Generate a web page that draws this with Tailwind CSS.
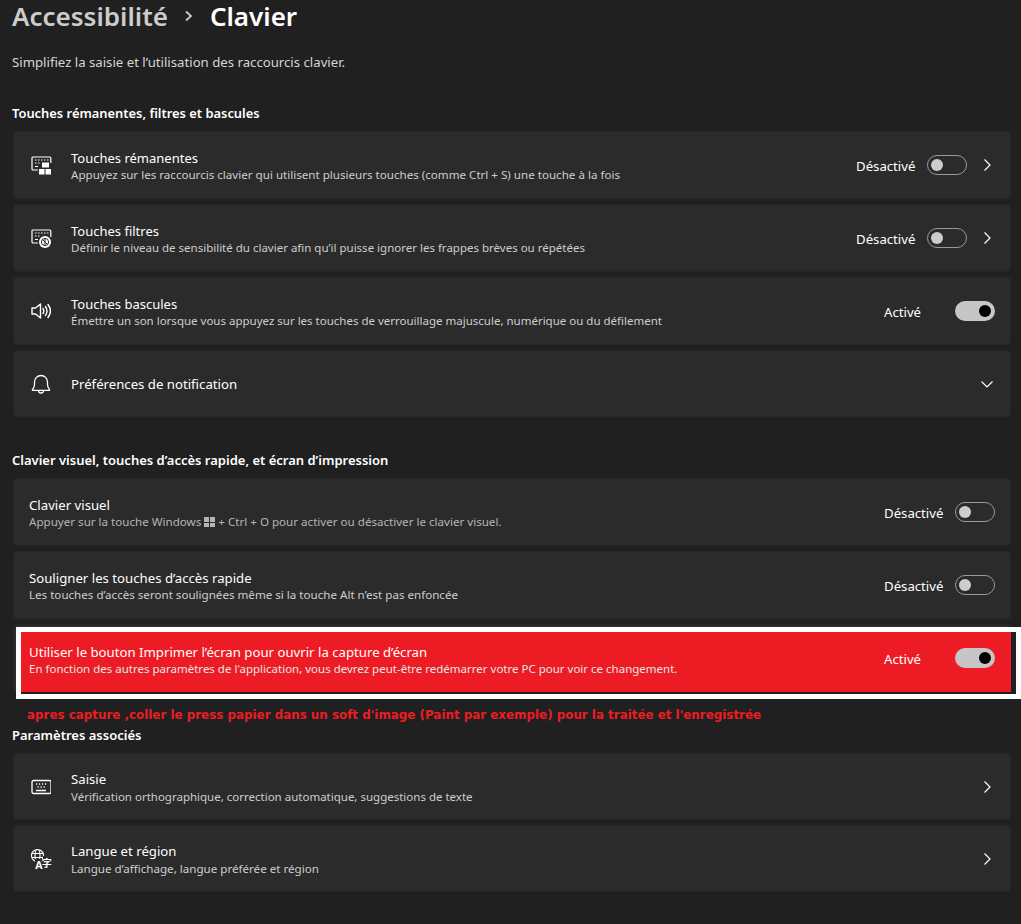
<!DOCTYPE html>
<html lang="fr">
  <head>
    <meta charset="UTF-8" />
    <meta name="viewport" content="width=device-width, initial-scale=1.0" />
    <title>Clavier</title>
    <script src="https://cdn.jsdelivr.net/npm/@tailwindcss/browser@4"></script>
  </head>
  <body class="bg-[#202020] font-['Noto_Sans','Open_Sans',sans-serif] text-white">
    <div class="h-[924px] w-[1021px] overflow-hidden pl-[12px] pr-[10px]">
      <!-- En-tete -->
      <div class="flex h-[32px] items-center text-[26px] font-semibold leading-[32px]">
        <span class="text-[#cccccc]">Accessibilité</span>
        <svg class="ml-[16px] mr-[16px] h-[12px] w-[10px]" viewBox="0 0 10 12" fill="none" stroke="#cccccc" stroke-width="1.8"><path d="M2 1.500L7 6l-5 4.500" /></svg>
        <span>Clavier</span>
      </div>
      <p class="mt-[20px] h-[20px] text-[13.2px] leading-[20px] text-[#d6d6d6]">Simplifiez la saisie et l’utilisation des raccourcis clavier.</p>

      <!-- Touches -->
      <h2 class="mt-[31px] mb-[8px] h-[20px] text-[12.9px] font-semibold leading-[20px]">Touches rémanentes, filtres et bascules</h2>
      <div class="ml-px flex flex-col gap-[5px]">
        <div class="flex h-[68px] items-center rounded-[4px] border border-[#262626] bg-[#2b2b2b] pl-[17px] pr-[15px]">
          <svg class="mr-[20px] h-[20px] w-[20px] shrink-0 overflow-visible" viewBox="0 0 20 20" fill="none" stroke="#fff" stroke-width="1.200">
            <path d="M7 15H2a1 1 0 0 1-1-1V3a1 1 0 0 1 1-1h16.800a1 1 0 0 1 1 1v5" />
            <path d="M4 5h1.500M7 5h1.500M10 5h1.500M13 5h1.500M16 5h1.500M4 8h1.500M7 8h1.500M4 11.500h3" />
            <rect x="11" y="7.500" width="7" height="5" fill="#fff" stroke="none" />
            <rect x="8" y="14" width="5.500" height="5.500" fill="#fff" stroke="none" />
            <rect x="14.500" y="14" width="5.500" height="5.500" fill="#fff" stroke="none" />
          </svg>
          <div class="min-w-0 flex-1 pt-[2px]">
            <div class="text-[13px] leading-[18px]">Touches rémanentes</div>
            <div class="text-[11.6px] leading-[16px] text-[#cecece]">Appuyez sur les raccourcis clavier qui utilisent plusieurs touches (comme Ctrl + S) une touche à la fois</div>
          </div>
          <span class="mr-[12px] mt-[4px] w-[59px] text-[13.2px]">Désactivé</span>
          <div class="flex h-[20px] w-[40px] items-center rounded-full border border-[#9a9a9a] pl-[3px]"><div class="h-[12px] w-[12px] rounded-full bg-[#cdcdcd]"></div></div>
          <svg class="ml-[12px] h-[16px] w-[16px]" viewBox="0 0 16 16" fill="none" stroke="#fff" stroke-width="1.2"><path d="M5.5 2.5L11 8l-5.5 5.5" /></svg>
        </div>

        <div class="flex h-[68px] items-center rounded-[4px] border border-[#262626] bg-[#2b2b2b] pl-[17px] pr-[15px]">
          <svg class="mr-[20px] h-[20px] w-[20px] shrink-0 overflow-visible" viewBox="0 0 20 20" fill="none" stroke="#fff" stroke-width="1.200">
            <path d="M7 15H2a1 1 0 0 1-1-1V3a1 1 0 0 1 1-1h16.800a1 1 0 0 1 1 1v6" />
            <path d="M4 5h1.500M7 5h1.500M10 5h1.500M13 5h1.500M16 5h1.500M4 8h1.500M7 8h1.500M4 11.500h3" />
            <circle cx="14" cy="14" r="6" fill="#fff" stroke="none" />
            <circle cx="14" cy="14" r="3.600" stroke="#2b2b2b" stroke-width="1" />
            <path d="M11.500 11.500l5 5M14 10.500v7" stroke="#2b2b2b" stroke-width="1" />
          </svg>
          <div class="min-w-0 flex-1 pt-[2px]">
            <div class="text-[13px] leading-[18px]">Touches filtres</div>
            <div class="text-[11.5px] leading-[16px] text-[#cecece]">Définir le niveau de sensibilité du clavier afin qu’il puisse ignorer les frappes brèves ou répétées</div>
          </div>
          <span class="mr-[12px] mt-[4px] w-[59px] text-[13.2px]">Désactivé</span>
          <div class="flex h-[20px] w-[40px] items-center rounded-full border border-[#9a9a9a] pl-[3px]"><div class="h-[12px] w-[12px] rounded-full bg-[#cdcdcd]"></div></div>
          <svg class="ml-[12px] h-[16px] w-[16px]" viewBox="0 0 16 16" fill="none" stroke="#fff" stroke-width="1.2"><path d="M5.5 2.5L11 8l-5.5 5.5" /></svg>
        </div>

        <div class="flex h-[68px] items-center rounded-[4px] border border-[#262626] bg-[#2b2b2b] pl-[17px] pr-[15px]">
          <svg class="mr-[20px] h-[20px] w-[20px] shrink-0" viewBox="0 0 20 20" fill="none" stroke="#fff" stroke-width="1.400">
            <path d="M1 7h3.500L9.500 3v14l-5-4H1z" stroke-linejoin="round" />
            <path d="M12 7.500c1 1.500 1 3.500 0 5M14.500 5.500c2 3 2 6 0 9M17 3.500c3 4 3 9 0 13" stroke-linecap="round" />
          </svg>
          <div class="min-w-0 flex-1 pt-[2px]">
            <div class="text-[13px] leading-[18px]">Touches bascules</div>
            <div class="text-[11.5px] leading-[16px] text-[#cecece]">Émettre un son lorsque vous appuyez sur les touches de verrouillage majuscule, numérique ou du défilement</div>
          </div>
          <span class="mr-[12px] mt-[4px] w-[59px] text-[13.2px]">Activé</span>
          <div class="flex h-[20px] w-[40px] items-center justify-end rounded-full bg-[#c6c6c6] pr-[4px]"><div class="h-[12px] w-[12px] rounded-full bg-black"></div></div>
        </div>

        <div class="flex h-[67px] items-center rounded-[4px] border border-[#262626] bg-[#2b2b2b] pl-[17px] pr-[15px]">
          <svg class="mr-[20px] h-[20px] w-[20px] shrink-0" viewBox="0 0 20 20" fill="none" stroke="#fff" stroke-width="1.300">
            <path d="M1.500 15.500c1.500-1.500 2-2.500 2-5V8a6.500 6.500 0 0 1 13 0v2.500c0 2.500 .5 3.500 2 5 .3 .4 0 .8-.4 .8H1.900c-.4 0-.7-.4-.4-.8z" stroke-linejoin="round" />
            <path d="M7.500 16.500a2.500 2.500 0 0 0 5 0" />
          </svg>
          <div class="min-w-0 flex-1 pt-[2px] text-[13.2px]">Préférences de notification</div>
          <svg class="h-[16px] w-[16px]" viewBox="0 0 16 16" fill="none" stroke="#fff" stroke-width="1.2"><path d="M2.500 5.500L8 11l5.500-5.500" /></svg>
        </div>
      </div>

      <!-- Clavier visuel -->
      <h2 class="mt-[33px] mb-[8px] h-[20px] text-[13px] font-semibold leading-[20px]">Clavier visuel, touches d’accès rapide, et écran d’impression</h2>
      <div class="ml-px flex flex-col gap-[5px]">
        <div class="flex h-[68px] items-center rounded-[4px] border border-[#262626] bg-[#2b2b2b] pl-[15px] pr-[15px]">
          <div class="min-w-0 flex-1 pt-[2px]">
            <div class="text-[13.2px] leading-[18px]">Clavier visuel</div>
            <div class="flex items-center text-[11.6px] leading-[16px] text-[#b5b5b5]">
              <span>Appuyer sur la touche Windows</span>
              <span class="mx-[3px] grid h-[10px] w-[11px] grid-cols-2 gap-px"><i class="bg-[#b5b5b5]"></i><i class="bg-[#b5b5b5]"></i><i class="bg-[#b5b5b5]"></i><i class="bg-[#b5b5b5]"></i></span>
              <span>+ Ctrl + O pour activer ou désactiver le clavier visuel.</span>
            </div>
          </div>
          <span class="mr-[12px] mt-[4px] w-[59px] text-[13.2px]">Désactivé</span>
          <div class="flex h-[20px] w-[40px] items-center rounded-full border border-[#9a9a9a] pl-[3px]"><div class="h-[12px] w-[12px] rounded-full bg-[#cdcdcd]"></div></div>
        </div>

        <div class="flex h-[68px] items-center rounded-[4px] border border-[#262626] bg-[#2b2b2b] pl-[15px] pr-[15px]">
          <div class="min-w-0 flex-1 pt-[2px]">
            <div class="text-[13.2px] leading-[18px]">Souligner les touches d’accès rapide</div>
            <div class="text-[11.6px] leading-[16px] text-[#cecece]">Les touches d’accès seront soulignées même si la touche Alt n’est pas enfoncée</div>
          </div>
          <span class="mr-[12px] mt-[4px] w-[59px] text-[13.2px]">Désactivé</span>
          <div class="flex h-[20px] w-[40px] items-center rounded-full border border-[#9a9a9a] pl-[3px]"><div class="h-[12px] w-[12px] rounded-full bg-[#cdcdcd]"></div></div>
        </div>

        <!-- ligne encadree en blanc par dessus la carte -->
        <div class="relative h-[68px] rounded-[4px] border border-[#262626] bg-[#2b2b2b]">
          <div class="absolute left-[2px] top-[2px] h-[72px] w-[1005px] border-[5px] border-white bg-[#202020] pr-[5px] pb-[2px]">
            <div class="flex h-[60px] items-center bg-[#ed1c24] pl-[8px] pr-[16px] pb-[8px]">
              <div class="min-w-0 flex-1 pt-[3px]">
                <div class="text-[13.2px] leading-[18px]">Utiliser le bouton Imprimer l’écran pour ouvrir la capture d’écran</div>
                <div class="text-[11.5px] leading-[16px] text-[#e6e6e6]">En fonction des autres paramètres de l'application, vous devrez peut-être redémarrer votre PC pour voir ce changement.</div>
              </div>
              <span class="mr-[12px] mt-[4px] w-[59px] text-[13.2px]">Activé</span>
              <div class="flex h-[20px] w-[40px] items-center justify-end rounded-full bg-[#c6c6c6] pr-[4px]"><div class="h-[12px] w-[12px] rounded-full bg-black"></div></div>
            </div>
          </div>
        </div>
      </div>

      <p class="mt-[14px] h-[18px] pl-[15px] font-['DejaVu_Sans',sans-serif] text-[11.9px] font-bold leading-[18px] text-[#ed1c24]">apres capture ,coller le press papier dans un soft d'image (Paint par exemple) pour la traitée et l'enregistrée</p>

      <!-- Parametres associes -->
      <h2 class="mt-px mb-[8px] h-[20px] text-[13px] font-semibold leading-[20px]">Paramètres associés</h2>
      <div class="ml-px flex flex-col gap-[5px]">
        <div class="flex h-[67px] items-center rounded-[4px] border border-[#262626] bg-[#2b2b2b] pl-[17px] pr-[15px]">
          <svg class="mr-[20px] h-[20px] w-[20px] shrink-0" viewBox="0 0 20 20" fill="none" stroke="#fff" stroke-width="1.300">
            <rect x="1" y="3.500" width="19" height="13" rx="1.500" />
            <path d="M5 7h1.200M8 7h1.200M11 7h1.200M14 7h1.200M6.500 10h1.200M9.500 10h1.200M12.500 10h1.200M5 13.500h10" />
          </svg>
          <div class="min-w-0 flex-1 pt-[1px]">
            <div class="text-[13.2px] leading-[19px]">Saisie</div>
            <div class="text-[11.5px] leading-[16px] text-[#cecece]">Vérification orthographique, correction automatique, suggestions de texte</div>
          </div>
          <svg class="h-[16px] w-[16px]" viewBox="0 0 16 16" fill="none" stroke="#fff" stroke-width="1.2"><path d="M5.5 2.5L11 8l-5.5 5.5" /></svg>
        </div>

        <div class="flex h-[67px] items-center rounded-[4px] border border-[#262626] bg-[#2b2b2b] pl-[17px] pr-[15px]">
          <svg class="mr-[20px] h-[20px] w-[20px] shrink-0 overflow-visible" viewBox="0 0 20 20" fill="none" stroke="#fff" stroke-width="1.100">
            <circle cx="6.500" cy="6.500" r="6" />
            <ellipse cx="6.500" cy="6.500" rx="2.500" ry="6" />
            <path d="M.5 4.500h12M.5 8.500h12" />
            <rect x="4" y="10" width="16" height="10" fill="#2b2b2b" stroke="none" />
            <rect x="12" y="7" width="8" height="5" fill="#2b2b2b" stroke="none" />
            <text x="8" y="19.500" fill="#fff" stroke="none" font-size="10.500" font-weight="700" text-anchor="middle" font-family="Noto Sans">A</text>
            <text x="15.700" y="18" fill="#fff" stroke="none" font-size="10" font-weight="700" text-anchor="middle" font-family="Noto Sans CJK SC">字</text>
          </svg>
          <div class="min-w-0 flex-1 pt-[1px]">
            <div class="text-[13.2px] leading-[19px]">Langue et région</div>
            <div class="text-[11.6px] leading-[16px] text-[#cecece]">Langue d’affichage, langue préférée et région</div>
          </div>
          <svg class="h-[16px] w-[16px]" viewBox="0 0 16 16" fill="none" stroke="#fff" stroke-width="1.2"><path d="M5.5 2.5L11 8l-5.5 5.5" /></svg>
        </div>
      </div>
    </div>
  </body>
</html>
